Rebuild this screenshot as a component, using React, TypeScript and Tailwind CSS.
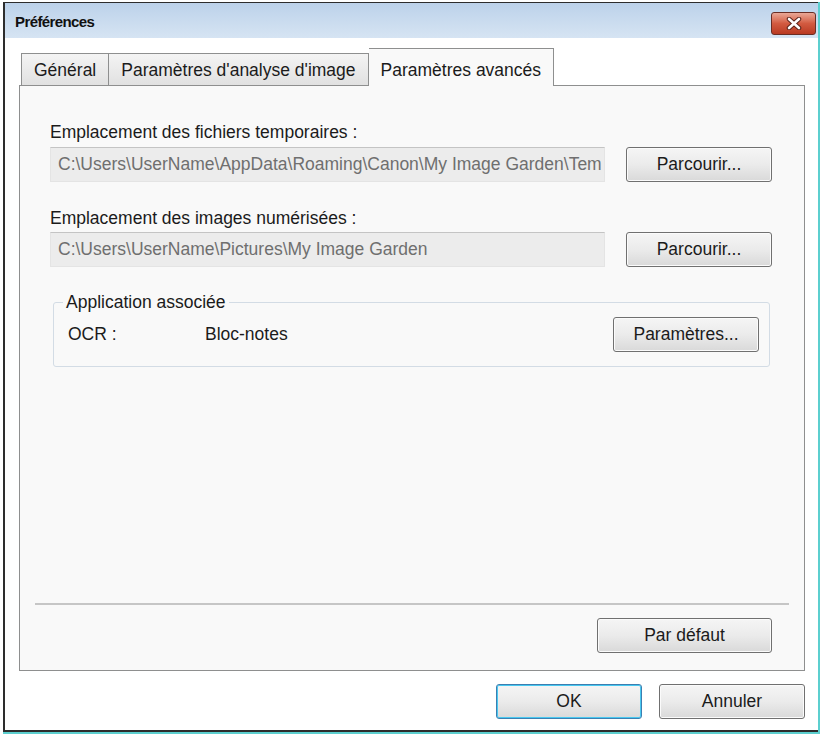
import React from 'react'

const font = "font-['Liberation_Sans',Arial,sans-serif]"

function WinButton({ children, className = '', primary = false }: { children: React.ReactNode; className?: string; primary?: boolean }) {
    return (
        <div
            className={`flex h-[35px] w-[146px] shrink-0 items-center justify-center rounded-[3px] border bg-gradient-to-b from-[#f5f5f5] via-[#ebebeb] to-[#d9d9d9] text-[17.5px] text-[#1b1b1b] ${primary ? 'border-[#3c7fb1] shadow-[inset_0_0_0_1px_#48c8f0]' : 'border-[#707070] shadow-[inset_0_0_0_1px_#fbfbfb]'} ${className}`}
        >
            {children}
        </div>
    )
}

function PathField({ value }: { value: string }) {
    return (
        <div className="flex h-[35px] w-[555px] shrink-0 items-center overflow-hidden whitespace-nowrap border border-[#e4e4e4] border-t-[#c4c4c4] bg-[#ececec] pl-[7px] text-[17.5px] text-[#6f6f6f]">
            {value}
        </div>
    )
}

export default function App() {
    return (
        <div className={`h-[734px] w-[820px] bg-white pl-[3px] pt-[2px] ${font}`}>
            <div className="flex h-[732px] w-[817px] flex-col border-b-2 border-r-2 border-[#5ccfcf]">
                <div className="flex flex-1 flex-col border-b-2 border-l-2 border-t border-[#2d2d2d] bg-white">
                    {/* title bar */}
                    <header className="flex h-[35px] shrink-0 items-start justify-between bg-gradient-to-b from-[#bcd2ea] to-[#d6e4f3] pl-[10px] pr-[2px]">
                        <span className="mt-[8px] text-[15px] font-bold tracking-[-0.6px] text-[#111]">Préférences</span>
                        <div className="mt-[9px] flex h-[23px] w-[45px] items-center justify-center rounded-[3px] border border-[#6a2e25] bg-gradient-to-b from-[#e9a796] via-[#d25a40] to-[#b93a22]">
                            <svg width="16" height="13" viewBox="0 0 16 13">
                                <path d="M3 2 L13 11 M13 2 L3 11" stroke="#5a2219" strokeWidth="4.5" strokeLinecap="round" />
                                <path d="M3 2 L13 11 M13 2 L3 11" stroke="#ffffff" strokeWidth="2.6" strokeLinecap="round" />
                            </svg>
                        </div>
                    </header>

                    <div className="flex flex-1 flex-col pl-[14px] pr-[13px] pt-[10px] pb-[11px]">
                        {/* tabs */}
                        <div className="flex items-end pl-[2px] text-[17.5px] text-[#1b1b1b]">
                            <div className="flex h-[32px] items-center border border-b-0 border-[#8e8f8f] bg-gradient-to-b from-[#f4f4f4] to-[#e1e1e1] px-[12px] pt-[1px]">Général</div>
                            <div className="flex h-[32px] items-center border border-b-0 border-l-0 border-[#8e8f8f] bg-gradient-to-b from-[#f4f4f4] to-[#e1e1e1] px-[12px] pt-[1px]">Paramètres d'analyse d'image</div>
                            <div className="relative z-10 -mb-px flex h-[38px] items-start border border-b-0 border-l-0 border-[#8e8f8f] bg-[#f9f9f9] px-[12px] pt-[8px]">Paramètres avancés</div>
                        </div>

                        {/* panel */}
                        <section className="flex flex-1 flex-col border border-[#8e8f8f] bg-[#f9f9f9] pt-[36px] pb-[17px] text-[17.5px] text-[#1b1b1b]">
                            <div className="pl-[30px]">
                                <div className="leading-[20px]">Emplacement des fichiers temporaires :</div>
                                <div className="mt-[5px] flex items-center gap-[21px]">
                                    <PathField value="C:\Users\UserName\AppData\Roaming\Canon\My Image Garden\Tem" />
                                    <WinButton>Parcourir...</WinButton>
                                </div>

                                <div className="mt-[26px] leading-[20px]">Emplacement des images numérisées :</div>
                                <div className="mt-[4px] flex items-center gap-[21px]">
                                    <PathField value="C:\Users\UserName\Pictures\My Image Garden" />
                                    <WinButton>Parcourir...</WinButton>
                                </div>
                            </div>

                            <fieldset className="ml-[33px] mr-[34px] mt-[25px] rounded-[3px] border border-[#d3dce5] pb-[14px] pl-[14px] pr-[10px]">
                                <legend className="ml-[-5px] px-[3px] leading-[20px]">Application associée</legend>
                                <div className="mt-[5px] flex items-center">
                                    <span className="w-[137px]">OCR :</span>
                                    <span className="flex-1">Bloc-notes</span>
                                    <WinButton>Paramètres...</WinButton>
                                </div>
                            </fieldset>

                            <div className="mx-[15px] mt-auto h-[2px] bg-[#c6c6c6]" />
                            <div className="mt-[13px] flex justify-end pr-[32px]">
                                <WinButton className="w-[175px]">Par défaut</WinButton>
                            </div>
                        </section>

                        <div className="mt-[13px] flex justify-end gap-[17px]">
                            <WinButton primary>OK</WinButton>
                            <WinButton>Annuler</WinButton>
                        </div>
                    </div>
                </div>
            </div>
        </div>
    )
}
